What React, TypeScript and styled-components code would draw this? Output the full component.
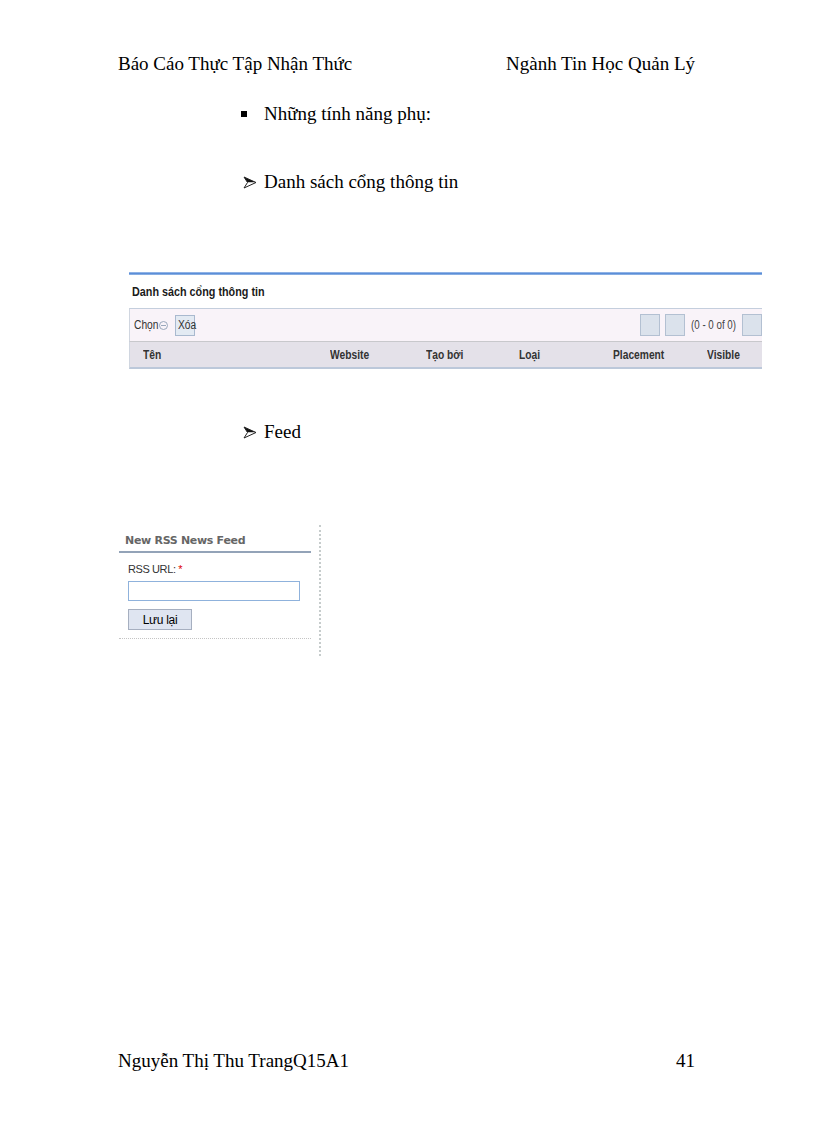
import React from "react";
import styled, { createGlobalStyle } from "styled-components";

const Global = createGlobalStyle`
  html, body { margin: 0; padding: 0; background: #fff; }
  body { font-family: "Liberation Serif", "Times New Roman", serif; color: #000; }
`;

const Page = styled.div`
  width: 816px;
  height: 1123px;
  display: flex;
  flex-direction: column;
  box-sizing: border-box;
  padding: 53px 0 0 0;
  overflow: hidden;
`;

const HeaderBar = styled.header`
  display: flex;
  justify-content: space-between;
  padding: 0 121px 0 118px;
  font-size: 19px;
  line-height: 22px;
`;

const ListItem = styled.div<{ $top: number }>`
  display: flex;
  align-items: center;
  margin-top: ${(p) => p.$top}px;
  padding-left: 240px;
  font-size: 19px;
  line-height: 22px;
`;

const Marker = styled.span`
  width: 24px;
  flex: none;
  display: flex;
  align-items: center;
`;

const Square = styled.span`
  width: 6px;
  height: 6px;
  background: #000;
  margin-left: 1px;
`;

const ArrowIcon = () => (
  <svg width="14" height="13" viewBox="0 0 14 13" style={{ marginLeft: 3 }}>
    <path d="M1 1 L13 6.5 L4.5 6.5 Z" fill="#111" />
    <path d="M1 12 L13 6.5 L4.5 6.5 Z" fill="#fff" />
    <path d="M1 1 L13 6.5 L1 12 L4.5 6.5 Z" fill="none" stroke="#222" strokeWidth="1" strokeLinejoin="miter" />
  </svg>
);

/* ---------- portal list table ---------- */

const TableWrap = styled.div`
  margin: 79px 0 0 129px;
  width: 633px;
  overflow: hidden;
  font-family: "Liberation Sans", Arial, sans-serif;
`;

const Narrow = styled.span<{ $w?: number }>`
  display: inline-block;
  white-space: nowrap;
  transform: scaleX(${(p) => p.$w ?? 0.82});
  transform-origin: left center;
`;

const BlueRule = styled.div`
  height: 3px;
  background: linear-gradient(#a8c4ec, #5b8ed8 50%, #9ebde8);
`;

const TableTitle = styled.div`
  height: 33px;
  display: flex;
  align-items: center;
  padding-left: 3px;
  font-size: 13.5px;
  font-weight: bold;
  color: #1a1a1a;
`;

const Toolbar = styled.div`
  height: 32px;
  display: flex;
  align-items: center;
  border-top: 1px solid #c4cedd;
  border-left: 1px solid #d0d6e0;
  background: #f9f3f9;
  padding-left: 4px;
  font-size: 12.5px;
  color: #444;
`;

const ChonLabel = styled.span`
  display: flex;
  align-items: center;
  width: 37px;
  color: #333;
`;

const ChonText = styled.span`
  width: 25px;
  overflow: visible;
`;

const CircleIcon = styled.span`
  width: 7px;
  height: 7px;
  border: 1px solid #9aa8bc;
  border-radius: 50%;
  position: relative;
  &::after {
    content: "";
    position: absolute;
    left: 1px;
    right: 1px;
    top: 3px;
    height: 1px;
    background: #9aa8bc;
  }
`;

const XoaButton = styled.span`
  margin-left: 4px;
  width: 20px;
  height: 21px;
  box-sizing: border-box;
  padding-left: 2px;
  display: flex;
  align-items: center;
  border: 1px solid #a9b9cf;
  background: #e3eaf3;
  color: #333;
  overflow: visible;
`;

const Pager = styled.div`
  margin-left: auto;
  display: flex;
  align-items: center;
`;

const PagerBtn = styled.span<{ $gap: number }>`
  width: 20px;
  height: 22px;
  margin-left: ${(p) => p.$gap}px;
  box-sizing: border-box;
  border: 1px solid #b3c0d2;
  background: #dbe2ec;
`;

const PagerText = styled.span`
  width: 46px;
  margin-left: 6px;
  font-size: 12.5px;
  color: #444;
`;

const HeadRow = styled.div`
  display: grid;
  grid-template-columns: 188px 95px 94px 94px 94px 68px;
  height: 25px;
  align-items: center;
  border-top: 1px solid #c8c8cc;
  border-bottom: 2px solid #bcc8da;
  border-left: 1px solid #d0d6e0;
  background: #e4e1e9;
  font-size: 12.5px;
  font-weight: bold;
  color: #333;
`;

const HeadCell = styled.span<{ $pad: number }>`
  padding-left: ${(p) => p.$pad}px;
  white-space: nowrap;
`;

/* ---------- RSS feed widget ---------- */

const FeedSection = styled.div`
  margin: 82px 0 0 119px;
  display: flex;
  gap: 8px;
  font-family: "Liberation Sans", Arial, sans-serif;
`;

const FeedPanel = styled.div`
  width: 192px;
  padding-top: 9px;
`;

const FeedTitle = styled.div`
  padding: 0 0 4px 6px;
  font-family: "DejaVu Sans", Verdana, sans-serif;
  font-size: 11px;
  font-weight: bold;
  color: #666;
  border-bottom: 2px solid #93a3b8;
  letter-spacing: -0.3px;
`;

const FeedBody = styled.div`
  padding: 10px 0 8px 9px;
  border-bottom: 1px dotted #c4c4c4;
`;

const FieldLabel = styled.div`
  font-size: 11px;
  color: #333;
  letter-spacing: -0.4px;
  line-height: 13px;
`;

const Required = styled.span`
  color: #d00;
`;

const UrlInput = styled.div`
  margin-top: 5px;
  width: 172px;
  height: 20px;
  box-sizing: border-box;
  border: 1px solid #8fb2dc;
  background: #fff;
`;

const SaveButton = styled.div`
  margin-top: 8px;
  width: 64px;
  height: 21px;
  box-sizing: border-box;
  border: 1px solid #a6afc0;
  background: #dfe5f1;
  display: flex;
  align-items: center;
  justify-content: center;
  font-size: 12px;
  color: #000;
  letter-spacing: -0.3px;
`;

const VDivider = styled.div`
  width: 0;
  height: 131px;
  border-left: 2px dotted #c6cccc;
`;

const Footer = styled.footer`
  margin-top: auto;
  margin-bottom: 51px;
  display: flex;
  justify-content: space-between;
  padding: 0 121px 0 118px;
  font-size: 19px;
  line-height: 22px;
`;

export default function App() {
  return (
    <>
      <Global />
      <Page>
        <HeaderBar>
          <span>Báo Cáo Thực Tập Nhận Thức</span>
          <span>Ngành Tin Học Quản Lý</span>
        </HeaderBar>

        <ListItem $top={28}>
          <Marker>
            <Square />
          </Marker>
          Những tính năng phụ:
        </ListItem>

        <ListItem $top={46}>
          <Marker>
            <ArrowIcon />
          </Marker>
          Danh sách cổng thông tin
        </ListItem>

        <TableWrap>
          <BlueRule />
          <TableTitle>
            <Narrow $w={0.8}>Danh sách cổng thông tin</Narrow>
          </TableTitle>
          <Toolbar>
            <ChonLabel>
              <ChonText>
                <Narrow>Chọn</Narrow>
              </ChonText>
              <CircleIcon />
            </ChonLabel>
            <XoaButton>
              <Narrow>Xóa</Narrow>
            </XoaButton>
            <Pager>
              <PagerBtn $gap={0} />
              <PagerBtn $gap={5} />
              <PagerText>
                <Narrow $w={0.78}>(0 - 0 of 0)</Narrow>
              </PagerText>
              <PagerBtn $gap={5} />
            </Pager>
          </Toolbar>
          <HeadRow>
            <HeadCell $pad={13}>
              <Narrow>Tên</Narrow>
            </HeadCell>
            <HeadCell $pad={12}>
              <Narrow>Website</Narrow>
            </HeadCell>
            <HeadCell $pad={13}>
              <Narrow>Tạo bởi</Narrow>
            </HeadCell>
            <HeadCell $pad={12}>
              <Narrow>Loại</Narrow>
            </HeadCell>
            <HeadCell $pad={12}>
              <Narrow>Placement</Narrow>
            </HeadCell>
            <HeadCell $pad={12}>
              <Narrow>Visible</Narrow>
            </HeadCell>
          </HeadRow>
        </TableWrap>

        <ListItem $top={52}>
          <Marker>
            <ArrowIcon />
          </Marker>
          Feed
        </ListItem>

        <FeedSection>
          <FeedPanel>
            <FeedTitle>New RSS News Feed</FeedTitle>
            <FeedBody>
              <FieldLabel>
                RSS URL: <Required>*</Required>
              </FieldLabel>
              <UrlInput />
              <SaveButton>Lưu lại</SaveButton>
            </FeedBody>
          </FeedPanel>
          <VDivider />
        </FeedSection>

        <Footer>
          <span>Nguyễn Thị Thu TrangQ15A1</span>
          <span>41</span>
        </Footer>
      </Page>
    </>
  );
}
